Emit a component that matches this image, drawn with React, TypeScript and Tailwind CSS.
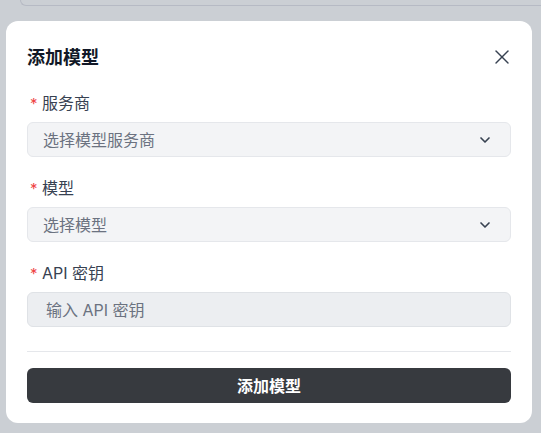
import { X, ChevronDown } from 'lucide-react';

const font = { fontFamily: '"Inter", "Noto Sans CJK SC", sans-serif' };

function Label({ text }: { text: string }) {
  return (
    <div className="flex items-center h-[22px] mb-2 text-[16px] text-[#374151]">
      <span className="text-[#ef4444] w-[11px] pl-[3px] text-[15px] leading-none">*</span>
      <span className="pl-[4px]">{text}</span>
    </div>
  );
}

function SelectBox({ placeholder }: { placeholder: string }) {
  return (
    <div className="flex items-center justify-between h-[35px] pl-[15px] pr-[17px] rounded-md border border-[#e5e7eb] bg-[#f3f4f6] text-[16px] text-[#6b7280]">
      <span>{placeholder}</span>
      <ChevronDown size={16} strokeWidth={2.5} className="text-[#374151]" />
    </div>
  );
}

export default function App() {
  return (
    <div style={font} className="w-[541px] h-[433px] bg-[#cbcfd4] overflow-hidden">
      {/* page behind the overlay */}
      <div className="ml-[20px] h-[6px] border-l border-b border-[#b6bac4] rounded-bl-lg" />

      <div className="ml-[6px] mt-[15px] w-[526px] bg-white rounded-xl px-[21px] pt-[24px] pb-[20px]">
        <div className="flex items-center justify-between h-[24px] mb-[23px]">
          <h2 className="text-[18px] font-bold text-[#111827]">添加模型</h2>
          <X size={24} strokeWidth={1.4} className="text-[#374151] mr-[-3px]" />
        </div>

        <div className="flex flex-col gap-5">
          <div>
            <Label text="服务商" />
            <SelectBox placeholder="选择模型服务商" />
          </div>
          <div>
            <Label text="模型" />
            <SelectBox placeholder="选择模型" />
          </div>
          <div>
            <Label text="API 密钥" />
            <div className="flex items-center h-[35px] pl-[18px] rounded-md border border-[#dfe2e6] bg-[#eceef1] text-[16px] text-[#6b7280]">
              输入 API 密钥
            </div>
          </div>
        </div>

        <div className="mt-6 border-t border-[#e5e7eb]" />

        <button className="mt-4 w-full h-[35px] rounded-md bg-[#373a3f] text-white text-[16px] font-bold">
          添加模型
        </button>
      </div>
    </div>
  );
}
